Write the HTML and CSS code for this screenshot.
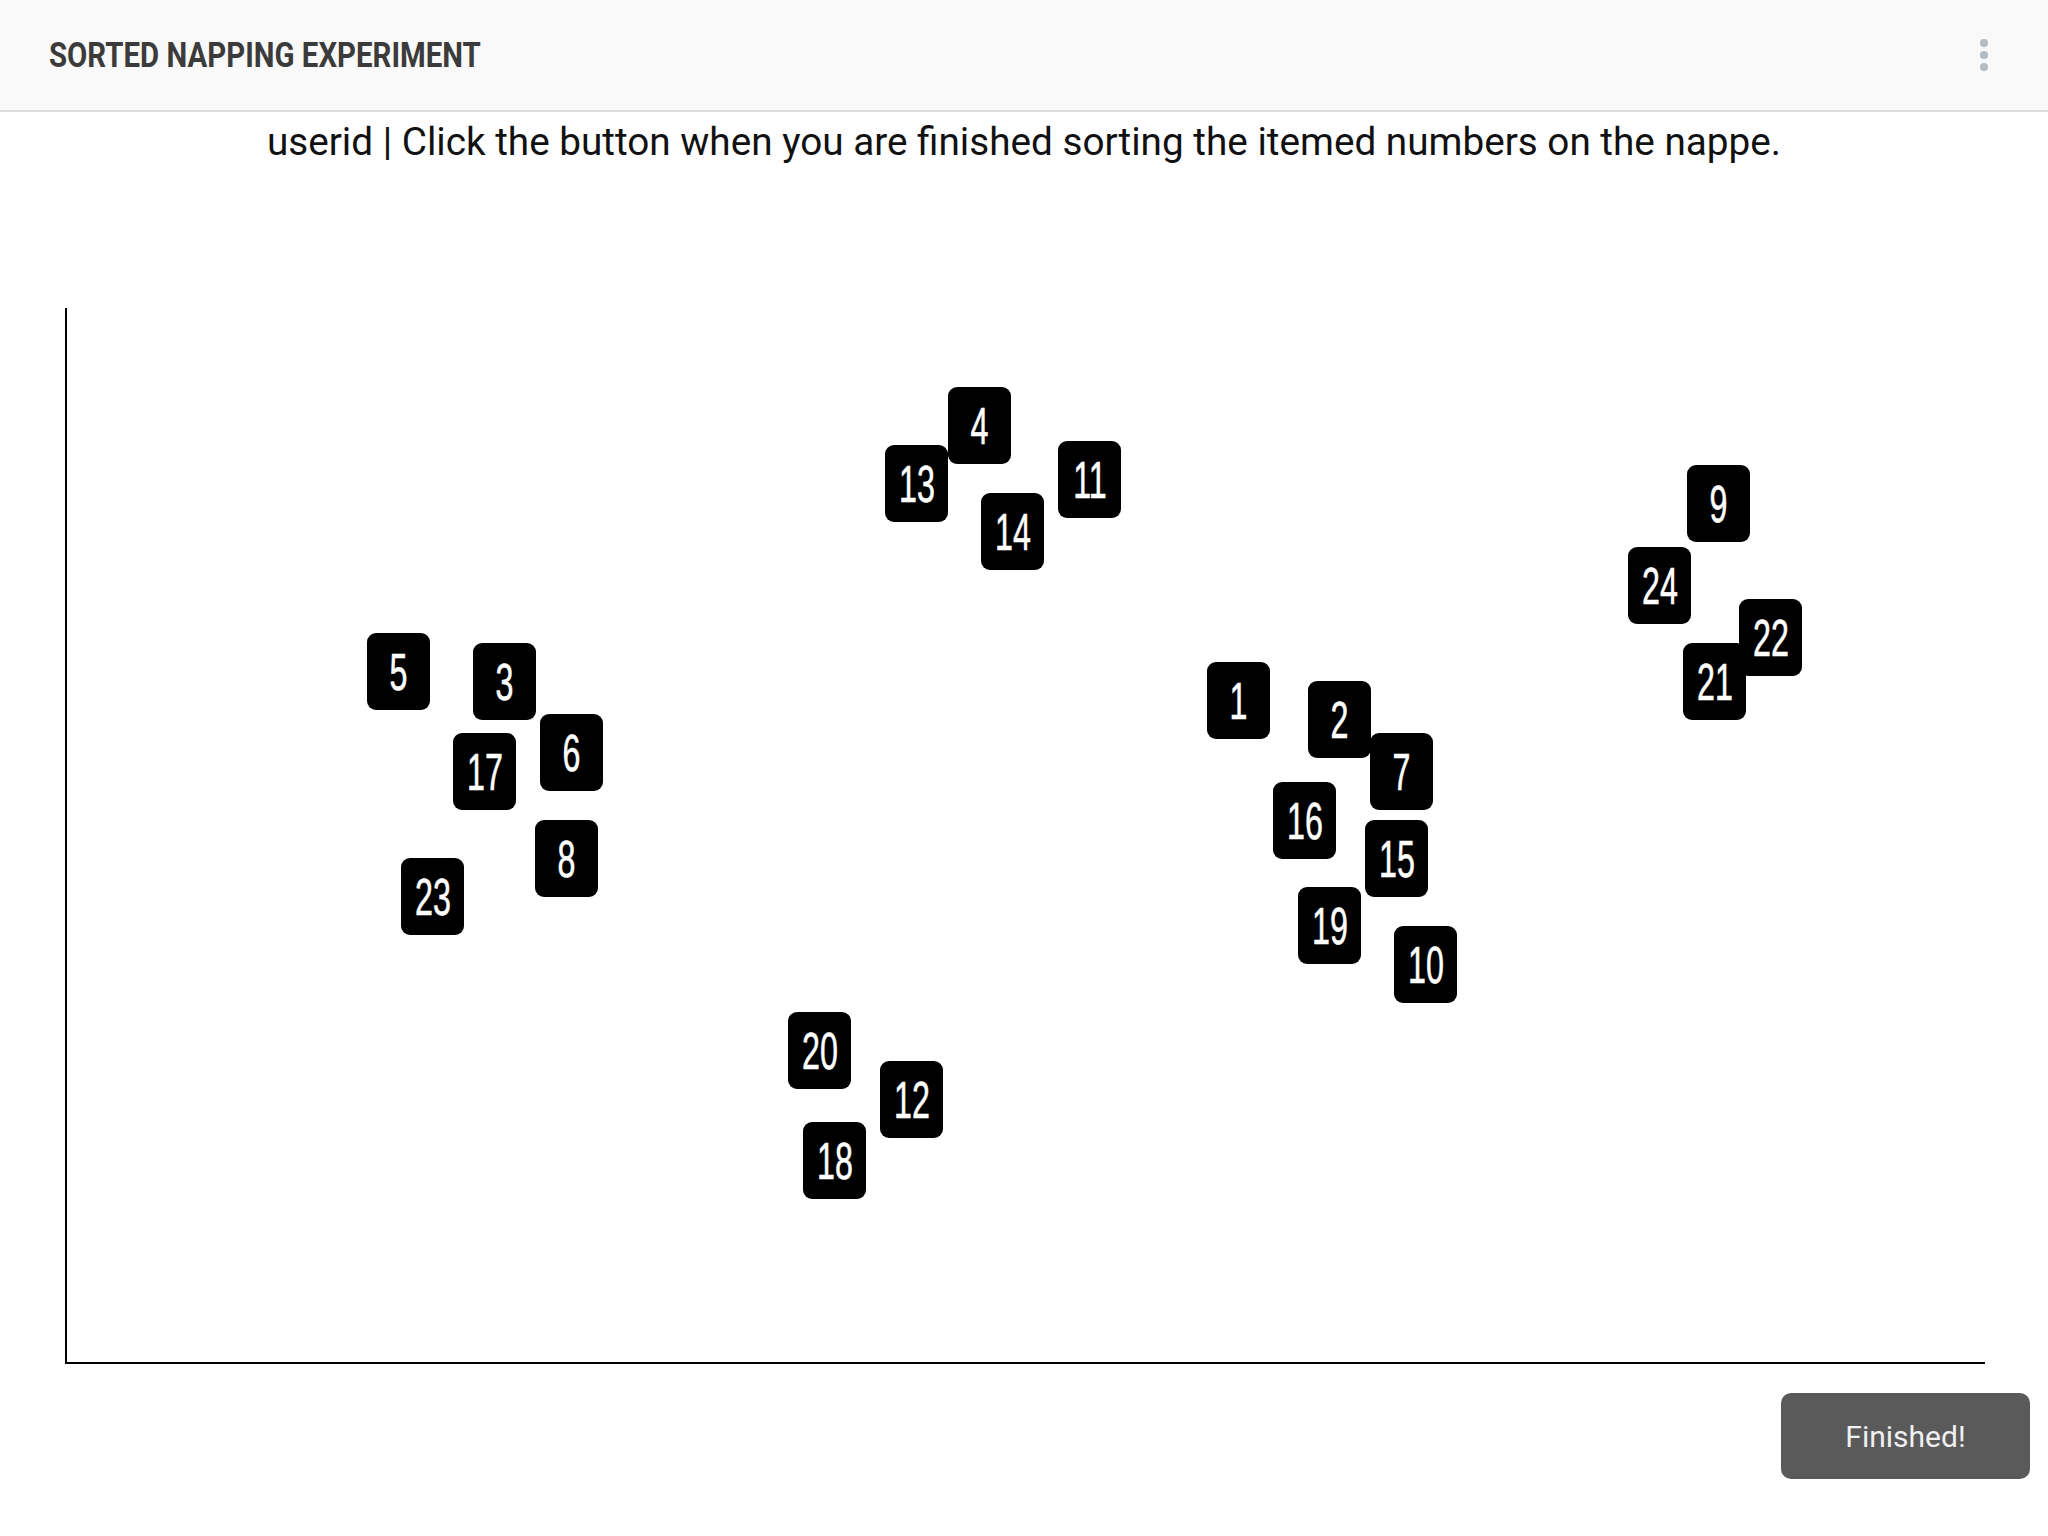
FILE: index.html
```html
<!DOCTYPE html>
<html lang="en">
<head>
  <meta charset="UTF-8" />
  <meta name="viewport" content="width=device-width, initial-scale=1.0"/>
  <title>Sorted Napping Experiment</title>
  <link rel="stylesheet" href="styles.css">
</head>
<body>

  <!-- Верхняя панель -->
  <header class="topbar">
    <h1 class="topbar-title"><span>SORTED NAPPING EXPERIMENT</span></h1>
    <div class="kebab">
      <svg width="12" height="36" viewBox="0 0 12 36">
        <circle cx="6" cy="6" r="4" fill="#b3bcc2"/>
        <circle cx="6" cy="18" r="4" fill="#b3bcc2"/>
        <circle cx="6" cy="30" r="4" fill="#b3bcc2"/>
      </svg>
    </div>
  </header>

  <main class="content">
    <p class="instructions">userid | Click the button when you are finished sorting the itemed numbers on the nappe.</p>

    <!-- Нappe: плитки лежат по своим координатам -->
    <div class="nappe">
      <div class="tile" style="left:300px;top:325px"><span>5</span></div>
      <div class="tile" style="left:406px;top:335px"><span>3</span></div>
      <div class="tile" style="left:473px;top:406px"><span>6</span></div>
      <div class="tile" style="left:386px;top:425px"><span>17</span></div>
      <div class="tile" style="left:468px;top:512px"><span>8</span></div>
      <div class="tile" style="left:334px;top:550px"><span>23</span></div>

      <div class="tile" style="left:881px;top:79px"><span>4</span></div>
      <div class="tile" style="left:818px;top:137px"><span>13</span></div>
      <div class="tile" style="left:991px;top:133px"><span>11</span></div>
      <div class="tile" style="left:914px;top:185px"><span>14</span></div>

      <div class="tile" style="left:1140px;top:354px"><span>1</span></div>
      <div class="tile" style="left:1241px;top:373px"><span>2</span></div>
      <div class="tile" style="left:1303px;top:425px"><span>7</span></div>
      <div class="tile" style="left:1206px;top:474px"><span>16</span></div>
      <div class="tile" style="left:1298px;top:512px"><span>15</span></div>
      <div class="tile" style="left:1231px;top:579px"><span>19</span></div>
      <div class="tile" style="left:1327px;top:618px"><span>10</span></div>

      <div class="tile" style="left:1620px;top:157px"><span>9</span></div>
      <div class="tile" style="left:1561px;top:239px"><span>24</span></div>
      <div class="tile" style="left:1672px;top:291px"><span>22</span></div>
      <div class="tile" style="left:1616px;top:335px"><span>21</span></div>

      <div class="tile" style="left:721px;top:704px"><span>20</span></div>
      <div class="tile" style="left:813px;top:753px"><span>12</span></div>
      <div class="tile" style="left:736px;top:814px"><span>18</span></div>
    </div>

    <div class="actions">
      <button class="finish-button">Finished!</button>
    </div>
  </main>

</body>
</html>
```

FILE: styles.css
```css
/* ======= Базовые стили ======= */
body {
  margin: 0;
  padding: 0;
  background: #fff;
  font-family: Roboto, "Liberation Sans", sans-serif;
  color: #111;
}

/* ======= Верхняя панель ======= */
.topbar {
  height: 112px;
  box-sizing: border-box;
  background: #f9f9f9;
  border-bottom: 2px solid #dcdcdc;
  display: flex;
  align-items: center;
  justify-content: space-between;
  padding: 0 58px 0 49px;
}

.topbar-title {
  margin: 0;
  font-size: 35px;
  font-weight: 700;
  color: #3b3b3b;
  white-space: nowrap;
}
.topbar-title span {
  display: inline-block;
  transform: scaleX(0.84);
  transform-origin: left center;
}

.kebab {
  display: flex;
  align-items: center;
}

/* ======= Содержимое ======= */
.content {
  display: flex;
  flex-direction: column;
}

.instructions {
  margin: 10px 0 0;
  text-align: center;
  font-size: 38.7px;
  line-height: 40px;
  color: #111;
}

/* ======= Поле сортировки (нappe) ======= */
.nappe {
  position: relative;
  margin: 146px 63px 0 65px;
  height: 1054px;
  border-left: 2px solid #000;
  border-bottom: 2px solid #000;
}

.tile {
  position: absolute;
  width: 63px;
  height: 77px;
  background: #000;
  border-radius: 9px;
  display: flex;
  align-items: center;
  justify-content: center;
  color: #fff;
  font-family: "Liberation Sans", Arial, sans-serif;
  font-size: 52px;
  line-height: 1;
}
.tile span {
  display: inline-block;
  transform: scaleX(0.62);
  padding-top: 1px;
  -webkit-text-stroke: 0.6px #fff;
}

/* ======= Кнопка ======= */
.actions {
  display: flex;
  justify-content: flex-end;
  padding: 29px 18px 0 0;
}

.finish-button {
  width: 249px;
  height: 86px;
  border: none;
  border-radius: 10px;
  background: #5a5a5b;
  color: #f0f0f0;
  font-family: Roboto, sans-serif;
  font-size: 30px;
  cursor: pointer;
}
```
